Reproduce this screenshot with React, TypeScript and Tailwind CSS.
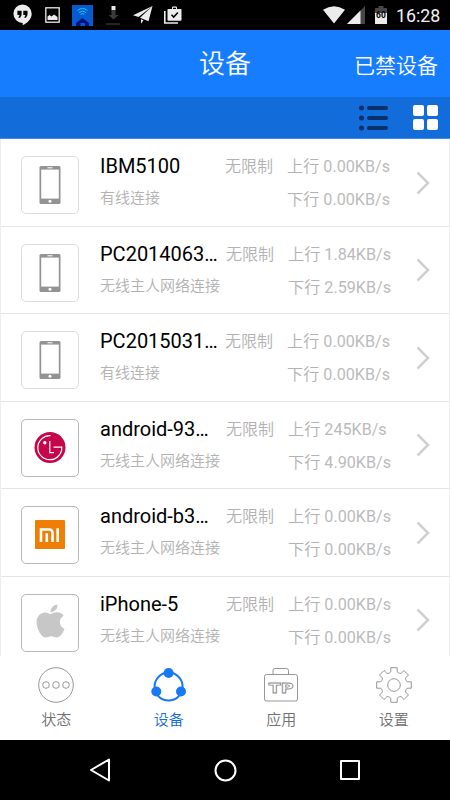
import type { ReactNode } from "react";
import { FaApple } from "react-icons/fa";

type Brand = "phone" | "lg" | "mi" | "apple";

interface Device {
  name: string;
  wired?: boolean;
  up: string;
  down: string;
  brand: Brand;
}

const devices: Device[] = [
  { name: "IBM5100", wired: true, up: "0.00KB/s", down: "0.00KB/s", brand: "phone" },
  { name: "PC2014063…", up: "1.84KB/s", down: "2.59KB/s", brand: "phone" },
  { name: "PC2015031…", wired: true, up: "0.00KB/s", down: "0.00KB/s", brand: "phone" },
  { name: "android-93…", up: "245KB/s", down: "4.90KB/s", brand: "lg" },
  { name: "android-b3…", up: "0.00KB/s", down: "0.00KB/s", brand: "mi" },
  { name: "iPhone-5", up: "0.00KB/s", down: "0.00KB/s", brand: "apple" },
];

function PhoneIcon() {
  return (
    <svg width="22" height="38" viewBox="0 0 22 38">
      <rect x="0.5" y="0" width="21" height="38" rx="1.5" fill="#939396" />
      <rect x="2.2" y="3.6" width="17.6" height="29" fill="#fff" />
      <rect x="8.5" y="1.3" width="5" height="1" fill="#fff" />
      <circle cx="11" cy="35.2" r="1.5" fill="#fff" />
    </svg>
  );
}

function LgIcon() {
  return (
    <svg width="32" height="32" viewBox="0 0 32 32" fill="none" stroke="#fff" strokeWidth="1.2">
      <circle cx="16" cy="15.5" r="15.5" fill="#c4064b" stroke="none" />
      <path d="M16.5 3.7A12 12 0 1 0 27.8 15.2H19.5" />
      <path d="M15.8 9V20.7H20" />
      <circle cx="10.8" cy="10.7" r="1.7" fill="#fff" stroke="none" />
    </svg>
  );
}

function MiIcon() {
  return (
    <svg width="30" height="30" viewBox="0 0 30 30">
      <rect width="30" height="29" rx="1" fill="#ef7e05" />
      <path d="M6 22V9.5H14.2Q17.5 9.5 17.5 13V22" fill="none" stroke="#fff" strokeWidth="2.6" />
      <path d="M11.8 13.3V22M22.7 8.2V22" stroke="#fff" strokeWidth="2.6" />
    </svg>
  );
}

function BrandIcon({ brand }: { brand: Brand }) {
  if (brand === "lg") return <LgIcon />;
  if (brand === "mi") return <MiIcon />;
  if (brand === "apple") return <FaApple className="-mt-[3px] h-[38px] w-[29px] text-[#c7c7c7]" />;
  return <PhoneIcon />;
}

function StatusBar() {
  return (
    <div className="flex h-[30px] items-center bg-black pl-[13px] pr-[10px]">
      <svg width="19" height="22" viewBox="0 0 19 22">
        <path d="M9.5.5a9.2 9.2 0 0 1 9.2 9.3c0 4.8-3.5 9-9 11.4v-2.3A9.2 9.2 0 1 1 9.5.5Z" fill="#ececec" />
        <path d="M4.4 6.7h4.2v4.3l-1.5 2.8H5.3l1.3-2.8H4.4zM10.3 6.7h4.2v4.3l-1.5 2.8h-1.8l1.3-2.8h-2.2z" fill="#000" />
      </svg>
      <svg className="ml-[13px]" width="15" height="16" viewBox="0 0 15 16">
        <rect x=".8" y=".8" width="13.4" height="14.4" fill="none" stroke="#ececec" strokeWidth="1.3" />
        <path d="M2.5 13V9.5l2-1.5 2 1.5L9 7.5l3.5 2.5v3z" fill="#ececec" />
      </svg>
      <svg className="ml-[12px]" width="21" height="21" viewBox="0 0 21 21">
        <rect width="21" height="21" fill="#075bd0" />
        <path d="M4 21v-3L10.5 13l6.5 5v3h-4v-3H8.5v3z" fill="#06117e" />
        <path d="M5.5 5.5q5-4 10 0M7 7.5q3.500-2.800 7 0M8.700 9.300q1.800-1.400 3.600 0" fill="none" stroke="#1ccbe8" />
      </svg>
      <svg className="ml-[13px]" width="14" height="19" viewBox="0 0 14 19">
        <path d="M5.5 4v5H2.5l5 4.5 5-4.5h-3V4z" fill="#3b3b3b" />
        <rect x="5.5" width="4" height="4" fill="#ececec" />
        <path d="M0 18h14" stroke="#303030" strokeWidth="1.5" />
      </svg>
      <svg className="ml-[13px]" width="20" height="18" viewBox="0 0 20 18">
        <path d="M19.5 0 0 9.300l5.500 1.800zM19.500 0 7 11.700l8.500 3.500zM8 13.200v4.500l2.500-3.500z" fill="#ececec" />
      </svg>
      <svg className="ml-[11px]" width="19" height="18" viewBox="0 0 19 18">
        <path d="M.8 5v12H14" fill="none" stroke="#ececec" strokeWidth="1.6" />
        <path
          d="M4 3h4V1.500Q8 .5 9 .5h3q1 0 1 1V3h4q.5 0 .5.5V14q0 .8-.8.800H4.300Q3.500 14.800 3.500 14V3.500Q3.500 3 4 3M9 3h3V1.800H9z"
          fill="#ececec"
          fillRule="evenodd"
        />
        <path d="m7.500 8.800 2.200 2.300 4.200-4.500" fill="none" stroke="#000" strokeWidth="1.5" />
      </svg>
      <svg className="ml-auto" width="22" height="18" viewBox="0 0 22 18">
        <path d="M0 3.800Q11-3.500 22 3.800L11 17.500z" fill="#ececec" />
      </svg>
      <svg className="ml-[2px]" width="18" height="18" viewBox="0 0 18 18">
        <path d="M18 0v18H0z" fill="#474747" />
        <path d="M13.500 4.500V18H0z" fill="#ececec" />
      </svg>
      <div className="relative ml-[10px] h-[18px] w-[12px]">
        <svg width="12" height="18" viewBox="0 0 12 18">
          <path d="M0 2h3.500V0h5v2H12v16H0z" fill="#474747" />
          <path d="M0 7h12v11H0z" fill="#ececec" />
        </svg>
        <span className="absolute inset-x-0 top-[5px] text-center text-[8.5px] font-bold leading-[9px] text-black">60</span>
      </div>
      <span className="ml-[9px] w-[44px] whitespace-nowrap text-[17.8px] leading-[31px] text-[#f2f2f2]">16:28</span>
    </div>
  );
}

function Header() {
  return (
    <>
      <div className="grid h-[67px] grid-cols-3 bg-[#167dff] font-[350] text-white">
        <span className="col-start-2 text-center text-[26px] leading-[68px]">设备</span>
        <span className="whitespace-nowrap pr-[12px] text-right text-[21px] leading-[73px]">已禁设备</span>
      </div>
      <div className="flex h-[42px] items-center justify-end gap-[25px] border-b border-[#3f8ce4] bg-[#126cda] pr-[12px]">
        <svg width="29" height="26" viewBox="0 0 29 26" fill="#08316c">
          {[3, 13, 23].map((y) => (
            <g key={y}>
              <circle cx="2.5" cy={y} r="2.5" />
              <rect x="8" y={y - 2} width="21" height="4" rx="2" />
            </g>
          ))}
        </svg>
        <div className="grid grid-cols-2 gap-[3px]">
          {[0, 1, 2, 3].map((i) => (
            <span key={i} className="size-[11px] rounded-[2px] bg-white" />
          ))}
        </div>
      </div>
    </>
  );
}

function DeviceRow({ device }: { device: Device }) {
  const isPhone = device.brand === "phone";
  return (
    <div className="flex h-[87.5px] shrink-0 border-b border-[#e6e6e6] pl-[20px] pr-[19px] pt-[17px]">
      <div
        className={`flex size-[58px] shrink-0 items-center justify-center rounded-[5px] border ${
          isPhone ? "border-[#dcdcdc]" : "border-[#b8b8b8]"
        }`}
      >
        <BrandIcon brand={device.brand} />
      </div>
      <div className={`ml-[21px] shrink-0 whitespace-nowrap ${device.wired ? "w-[125px]" : "w-[126px]"}`}>
        <div className="h-[30px] text-[20px] leading-[21px] text-black">{device.name}</div>
        <div className="text-[15px] font-[350] leading-[24px] text-[#b2b2b2]">
          {device.wired ? "有线连接" : "无线主人网络连接"}
        </div>
      </div>
      <div className="w-[62px] shrink-0 text-[16px] font-[350] leading-[22px] text-[#b2b2b2]">无限制</div>
      <div className="whitespace-nowrap text-[16.15px] leading-[22px] text-[#bbbbbb]">
        <div className="h-[33px]">
          <span className="font-[350] text-[#b2b2b2]">上行</span> {device.up}
        </div>
        <div>
          <span className="font-[350] text-[#b2b2b2]">下行</span> {device.down}
        </div>
      </div>
      <svg className="ml-auto mt-[14.5px]" width="14" height="24" viewBox="0 0 14 24" fill="none" stroke="#d0d0d0" strokeWidth="2.5">
        <path d="m1.5 1.5 10.5 10.5L1.5 22.5" />
      </svg>
    </div>
  );
}

// Outline of an eight-toothed gear around (18, 18)
const gearPoints = Array.from({ length: 8 }, (_, i) => {
  const a = (i * Math.PI) / 4;
  return [
    [-4.2, -12.3],
    [-3.2, -13.2],
    [-3.2, -17.3],
    [3.2, -17.3],
    [3.2, -13.2],
    [4.2, -12.3],
  ]
    .map(([x, y]) => `${18 + x * Math.cos(a) - y * Math.sin(a)},${18 + x * Math.sin(a) + y * Math.cos(a)}`)
    .join(" ");
}).join(" ");

function Tab({ label, active, children }: { label: string; active?: boolean; children: ReactNode }) {
  return (
    <div className="flex flex-1 flex-col items-center pt-[11px]">
      <svg width="36" height="36" viewBox="0 0 36 36" fill="none" stroke="#8a8a8a" strokeWidth="0.9">
        {children}
      </svg>
      <span className={`mt-[6px] text-[15px] font-[350] leading-[22px] ${active ? "text-[#126cda]" : "text-[#707070]"}`}>
        {label}
      </span>
    </div>
  );
}

function TabBar() {
  return (
    <div className="flex h-[84px] bg-white">
      <Tab label="状态">
        <circle cx="18" cy="18" r="17.3" />
        <circle cx="8" cy="18" r="3.3" />
        <circle cx="18" cy="18" r="3.3" />
        <circle cx="28" cy="18" r="3.3" />
      </Tab>
      <Tab label="设备" active>
        <circle cx="17.6" cy="19.6" r="14" stroke="#1879f4" strokeWidth="2" />
        <g fill="#1879f4" stroke="none">
          <circle cx="17.6" cy="6" r="5" />
          <circle cx="5.3" cy="24.5" r="5" />
          <circle cx="30" cy="24.5" r="5" />
        </g>
      </Tab>
      <Tab label="应用">
        <rect x="1.5" y="7.5" width="33" height="26.5" rx="2" />
        <path d="M10 7.5V3.5q0-2 2-2h11.5q2 0 2 2v4" />
        <text
          transform="translate(18.2 26.2) scale(1.25 1)"
          textAnchor="middle"
          fontFamily="DejaVu Sans"
          fontSize="14"
          fontWeight="700"
          strokeWidth="0.8"
        >
          TP
        </text>
      </Tab>
      <Tab label="设置">
        <polygon points={gearPoints} strokeLinejoin="round" />
        <circle cx="18" cy="18" r="6.3" />
      </Tab>
    </div>
  );
}

function NavBar() {
  return (
    <div className="flex h-[60px] items-center bg-black pl-[89px]">
      <svg width="22" height="24" viewBox="0 0 22 24" fill="none" stroke="#fff" strokeWidth="2" strokeLinejoin="round">
        <path d="M20 1.5v21L2 12z" />
      </svg>
      <svg className="ml-[103px]" width="23" height="23" viewBox="0 0 23 23" fill="none" stroke="#fff" strokeWidth="2">
        <circle cx="11.5" cy="11.5" r="10" />
      </svg>
      <span className="ml-[103px] size-[20px] rounded-[1px] border-2 border-white" />
    </div>
  );
}

export default function App() {
  return (
    <div className="flex h-[800px] w-[450px] flex-col overflow-hidden bg-white font-['Roboto','Noto_Sans_CJK_SC',sans-serif]">
      <StatusBar />
      <Header />
      <div className="flex h-[517px] flex-col overflow-hidden border-x border-[#ededed] bg-white">
        {devices.map((device) => (
          <DeviceRow key={device.name} device={device} />
        ))}
      </div>
      <TabBar />
      <NavBar />
    </div>
  );
}
